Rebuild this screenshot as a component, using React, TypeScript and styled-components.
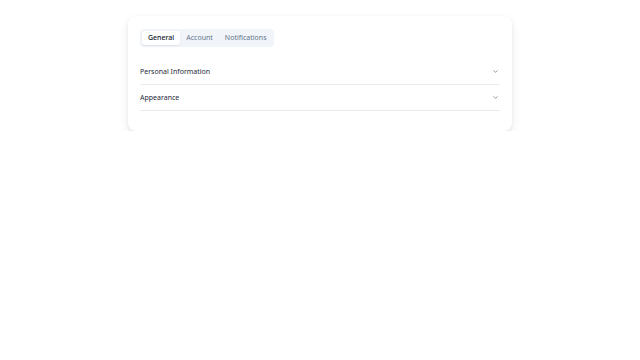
import { useState } from "react";
import styled, { createGlobalStyle } from "styled-components";

const tabs = ["General", "Account", "Notifications"];
const sections = ["Personal Information", "Appearance"];

function App() {
    const [active, setActive] = useState("General");
    const [open, setOpen] = useState<string | null>(null);

    return (
        <>
            <GlobalStyle />
            <Card>
                <TabList>
                    {tabs.map((t) => (
                        <Tab
                            key={t}
                            $active={t === active}
                            onClick={() => setActive(t)}
                        >
                            {t}
                        </Tab>
                    ))}
                </TabList>
                <Accordion>
                    {sections.map((s) => (
                        <Item key={s}>
                            <Trigger onClick={() => setOpen(open === s ? null : s)}>
                                <span>{s}</span>
                                <Chevron
                                    width="7"
                                    height="7"
                                    viewBox="0 0 24 24"
                                    $open={open === s}
                                >
                                    <path d="m6 9 6 6 6-6" />
                                </Chevron>
                            </Trigger>
                        </Item>
                    ))}
                </Accordion>
            </Card>
        </>
    );
}

const GlobalStyle = createGlobalStyle`
    body {
        margin: 0;
        background: #ffffff;
        font-family: "Noto Sans", "DejaVu Sans", sans-serif;
    }
`;

const Card = styled.div`
    width: 384px;
    margin: 16px auto 0;
    padding: 13px 12px 20px;
    box-sizing: border-box;
    background: #ffffff;
    border-radius: 8px;
    box-shadow: 0 4px 10px rgba(0, 0, 0, 0.08), 0 1px 3px rgba(0, 0, 0, 0.06);
`;

const TabList = styled.div`
    display: flex;
    width: fit-content;
    align-items: center;
    height: 18px;
    padding: 0 2px;
    box-sizing: border-box;
    background: #f1f5f9;
    border-radius: 4px;
`;

const Tab = styled.button<{ $active: boolean }>`
    border: none;
    height: 14px;
    padding: 0 6px;
    border-radius: 3px;
    font-family: inherit;
    font-size: 7px;
    line-height: 14px;
    font-weight: ${(p) => (p.$active ? 500 : 400)};
    color: ${(p) => (p.$active ? "#0f172a" : "#64748b")};
    background: ${(p) => (p.$active ? "#ffffff" : "transparent")};
    box-shadow: ${(p) => (p.$active ? "0 1px 2px rgba(0,0,0,0.08)" : "none")};
    cursor: pointer;
`;

const Accordion = styled.div`
    margin-top: 12px;
`;

const Item = styled.div`
    border-bottom: 1px solid #e8ebef;
`;

const Trigger = styled.button`
    width: 100%;
    height: 25px;
    padding: 0;
    border: none;
    background: transparent;
    display: flex;
    align-items: center;
    justify-content: space-between;
    font-family: inherit;
    font-size: 7px;
    font-weight: 400;
    color: #1e293b;
    cursor: pointer;
`;

const Chevron = styled.svg<{ $open: boolean }>`
    margin-right: 1px;
    fill: none;
    stroke: #475569;
    stroke-width: 2;
    stroke-linecap: round;
    stroke-linejoin: round;
    transform: rotate(${(p) => (p.$open ? 180 : 0)}deg);
`;

export default App;
